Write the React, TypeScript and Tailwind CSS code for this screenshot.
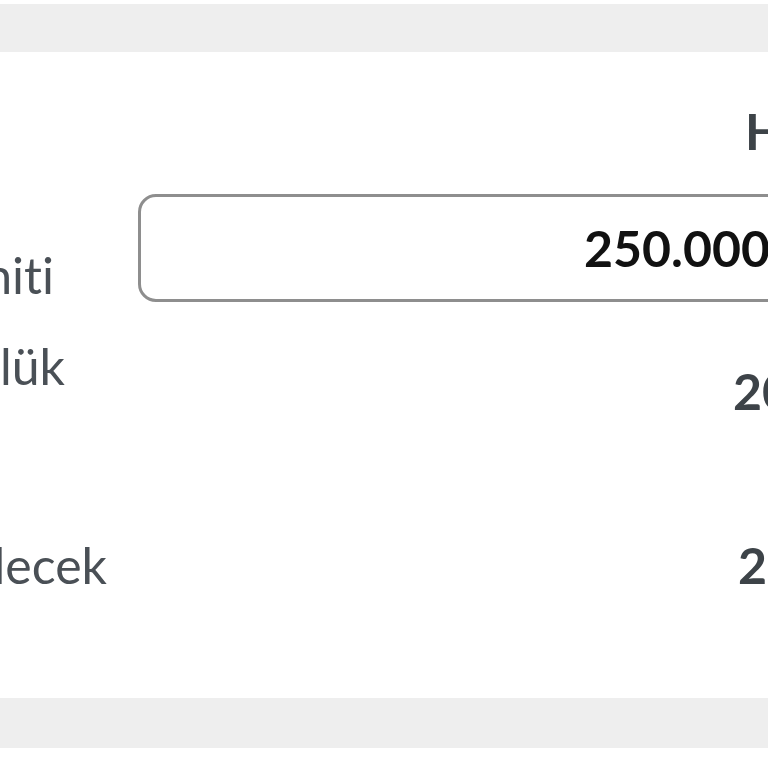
export default function App() {
  return (
    <div className="w-[768px] h-[768px] overflow-hidden bg-white font-['Lato','Liberation_Sans',sans-serif] [font-variant-ligatures:none]">
      <div className="h-[4px] bg-white" />
      <div className="h-[48px] bg-[#eeeeee]" />

      <div className="h-[646px] bg-white text-[50px] leading-[60px] whitespace-nowrap">
        {/* header */}
        <div className="flex pt-[49px]">
          <div className="ml-[745px] font-bold text-[#3d4348]">Hesap</div>
        </div>

        {/* limit row */}
        <div className="flex mt-[33px] h-[108px]">
          <div className="w-[54px] shrink-0 flex justify-end">
            <span className="mt-[51px] text-[#4a5056]">Kart Limiti</span>
          </div>
          <div className="ml-[84px] w-[760px] shrink-0 h-[108px] rounded-[18px] border-[3px] border-[#8e8e8e] flex items-center pl-[443px] font-bold text-[#111111]">
            250.000 TL
          </div>
        </div>

        {/* daily row */}
        <div className="flex h-[120px]">
          <div className="w-[65px] shrink-0 flex justify-end">
            <span className="mt-[34px] text-[#4a5056]">Günlük</span>
          </div>
          <div className="ml-[668px] mt-[59px] font-bold text-[#3d4348]">20.000</div>
        </div>

        {/* payable row */}
        <div className="flex mt-[113px]">
          <div className="w-[107px] shrink-0 flex justify-end">
            <span className="text-[#4a5056]">Ödenebilecek</span>
          </div>
          <div className="ml-[631px] font-bold text-[#3d4348]">25.000</div>
        </div>
      </div>

      <div className="h-[50px] bg-[#eeeeee]" />
      <div className="h-[20px] bg-white" />
    </div>
  );
}
